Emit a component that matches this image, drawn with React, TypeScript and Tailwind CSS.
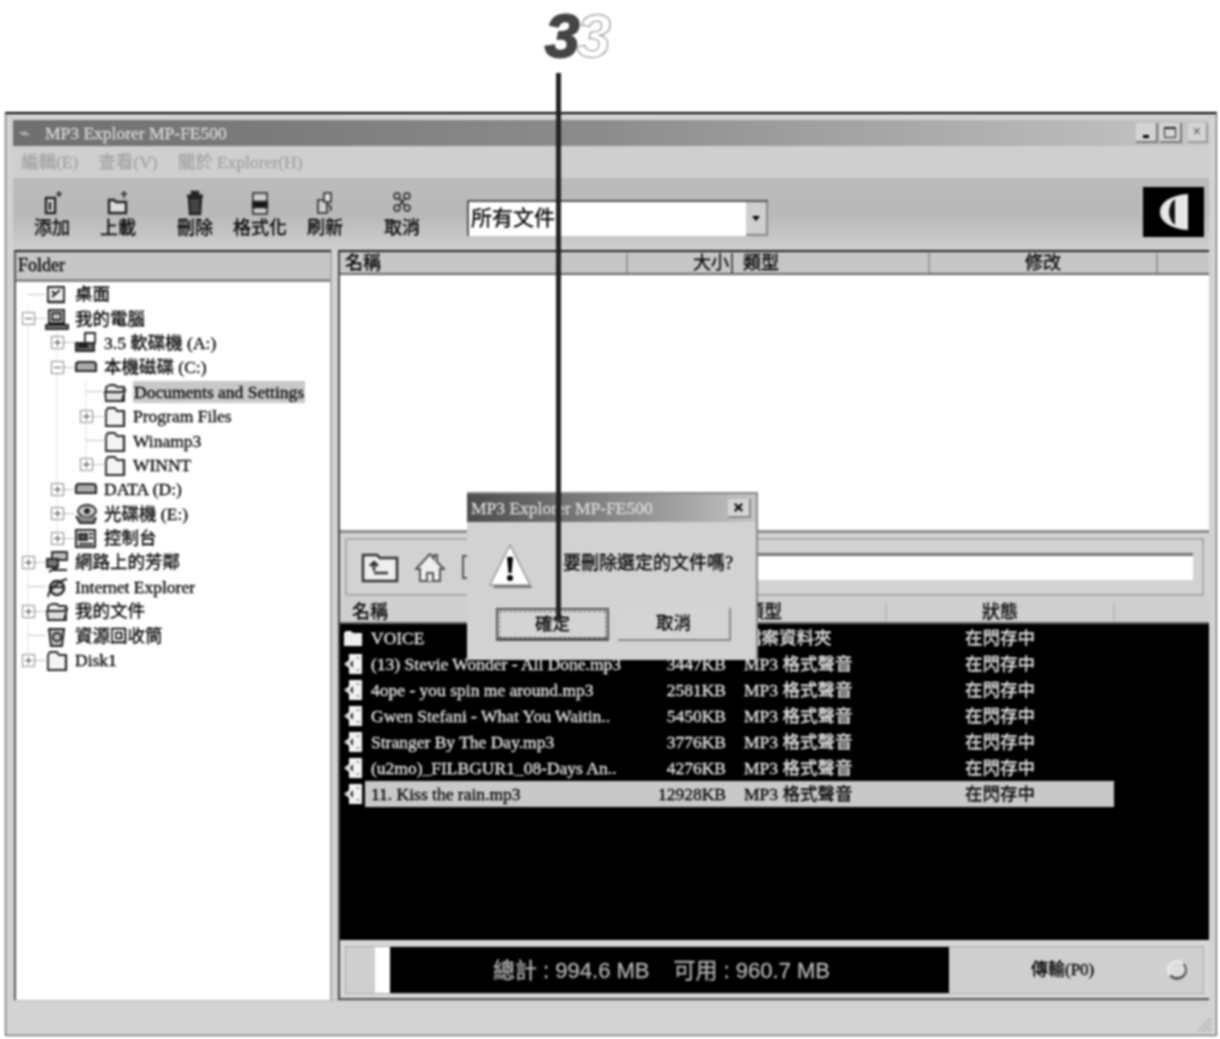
const tools = [
  { label: "添加", icon: "add", cls: "ml-[9px]" },
  { label: "上載", icon: "upload", cls: "ml-[6px]" },
  { label: "刪除", icon: "trash", cls: "ml-[17px]" },
  { label: "格式化", icon: "format", cls: "ml-[5px]" },
  { label: "刷新", icon: "refresh", cls: "ml-[5px]" },
  { label: "取消", icon: "cancel", cls: "ml-[17px]" },
];

const tree = [
  { label: "桌面", pad: "pl-[6px]", box: "", icon: "desktop" },
  { label: "我的電腦", pad: "pl-[6px]", box: "-", icon: "pc" },
  { label: "3.5 軟碟機 (A:)", pad: "pl-[35px]", box: "+", icon: "floppy" },
  { label: "本機磁碟 (C:)", pad: "pl-[35px]", box: "-", icon: "drive" },
  { label: "Documents and Settings", pad: "pl-[64px]", box: "", icon: "open", selected: true },
  { label: "Program Files", pad: "pl-[64px]", box: "+", icon: "folder" },
  { label: "Winamp3", pad: "pl-[64px]", box: "", icon: "folder" },
  { label: "WINNT", pad: "pl-[64px]", box: "+", icon: "folder" },
  { label: "DATA (D:)", pad: "pl-[35px]", box: "+", icon: "drive" },
  { label: "光碟機 (E:)", pad: "pl-[35px]", box: "+", icon: "cd" },
  { label: "控制台", pad: "pl-[35px]", box: "+", icon: "panel" },
  { label: "網路上的芳鄰", pad: "pl-[6px]", box: "+", icon: "net" },
  { label: "Internet Explorer", pad: "pl-[6px]", box: "", icon: "ie" },
  { label: "我的文件", pad: "pl-[6px]", box: "+", icon: "open" },
  { label: "資源回收筒", pad: "pl-[6px]", box: "", icon: "bin" },
  { label: "Disk1", pad: "pl-[6px]", box: "+", icon: "folder" },
];

const files = [
  { name: "VOICE", size: "", type: "檔案資料夾", folder: true },
  { name: "(13) Stevie Wonder - All Done.mp3", size: "3447KB", type: "MP3 格式聲音" },
  { name: "4ope - you spin me around.mp3", size: "2581KB", type: "MP3 格式聲音" },
  { name: "Gwen Stefani - What You Waitin..", size: "5450KB", type: "MP3 格式聲音" },
  { name: "Stranger By The Day.mp3", size: "3776KB", type: "MP3 格式聲音" },
  { name: "(u2mo)_FILBGUR1_08-Days An..", size: "4276KB", type: "MP3 格式聲音" },
  { name: "11. Kiss the rain.mp3", size: "12928KB", type: "MP3 格式聲音", selected: true },
];

function ToolIcon({ name }: { name: string }) {
  return (
    <svg width="26" height="28" viewBox="0 0 24 28" fill="none" stroke="#222" strokeWidth="2.4">
      {name === "add" && (
        <>
          <path d="M6 9h9v15H6z" fill="#ddd" />
          <path d="M10 13v8" />
          <path d="M19 2v6M16 5h6" strokeWidth="1.5" />
        </>
      )}
      {name === "upload" && (
        <>
          <path d="M3 11h5l2 2h10v11H3z" fill="#ddd" />
          <path d="M18 2v7M15 5h6" strokeWidth="1.5" />
        </>
      )}
      {name === "trash" && (
        <>
          <path d="M4 7h16" strokeWidth="3" />
          <path d="M9 3h6v3H9z" fill="#333" />
          <path d="M6 9h12l-1 16H7z" fill="#444" />
        </>
      )}
      {name === "format" && (
        <>
          <path d="M5 4h14v21H5z" fill="#ccc" strokeWidth="1.5" />
          <path d="M5 13h14v5H5z" fill="#111" />
        </>
      )}
      {name === "refresh" && (
        <>
          <path d="M5 11h9v13H5z" fill="#ccc" strokeWidth="1.5" />
          <path d="M11 4h7v9h-7z" fill="#ddd" strokeWidth="1.5" />
          <path d="M14 16c4 0 5 3 3 6" strokeWidth="1.5" />
        </>
      )}
      {name === "cancel" && (
        <>
          <circle cx="7" cy="7" r="3" strokeWidth="1.4" />
          <circle cx="17" cy="7" r="3" strokeWidth="1.4" />
          <circle cx="7" cy="19" r="3" strokeWidth="1.4" />
          <circle cx="17" cy="19" r="3" strokeWidth="1.4" />
          <path d="M9 9l6 8M15 9l-6 8" strokeWidth="1.4" />
        </>
      )}
    </svg>
  );
}

function TreeIcon({ name }: { name: string }) {
  return (
    <svg width="24" height="24" viewBox="0 0 24 24" fill="#ddd" stroke="#222" strokeWidth="1.8">
      {name === "desktop" && (
        <>
          <path d="M3 5h16v15H3z" fill="#eee" />
          <path d="M7 15l8-7M7 9l3 3" />
          <path d="M3 20h17" strokeWidth="2.5" />
        </>
      )}
      {name === "pc" && (
        <>
          <path d="M4 3h15v13H4z" fill="#fff" strokeWidth="2" />
          <path d="M7 6h9v7H7z" fill="#bbb" />
          <path d="M1 18h22v4H1z" fill="#888" />
        </>
      )}
      {name === "floppy" && (
        <>
          <path d="M11 2h10v10H11z" fill="#fff" />
          <path d="M2 12h18v8H2z" fill="#666" strokeWidth="2" />
          <path d="M5 14h8v2H5z" fill="#111" />
        </>
      )}
      {name === "drive" && <path d="M2 10c0-2 1-3 3-3h14c2 0 3 1 3 3v6H2z" fill="#aaa" strokeWidth="2" />}
      {name === "cd" && (
        <>
          <ellipse cx="13" cy="9" rx="9" ry="6" fill="#ccc" />
          <path d="M2 14l4 7h14l2-6" fill="#888" strokeWidth="2" />
          <circle cx="13" cy="9" r="2" fill="#222" />
        </>
      )}
      {name === "panel" && (
        <>
          <path d="M2 4h19v17H2z" fill="#eee" strokeWidth="2" />
          <path d="M5 8h8v6H5z" fill="#555" />
          <path d="M15 8h4M15 12h4M5 18h14" />
        </>
      )}
      {name === "net" && (
        <>
          <path d="M7 2h15v8H7z" fill="#bbb" />
          <path d="M2 9h11v8H2z" fill="#777" />
          <path d="M6 20h16M4 22c4-3 6-3 8-5" strokeWidth="2" />
        </>
      )}
      {name === "ie" && (
        <>
          <circle cx="12" cy="13" r="7" fill="#ddd" strokeWidth="2.5" />
          <path d="M6 12h12" strokeWidth="2" />
          <path d="M3 22c0-6 10-16 19-18" fill="none" strokeWidth="2" />
        </>
      )}
      {name === "bin" && (
        <>
          <path d="M4 5h15l-2 17H6z" fill="#bbb" strokeWidth="2" />
          <circle cx="12" cy="13" r="4" fill="none" />
        </>
      )}
      {name === "open" && (
        <>
          <path d="M3 7l4-2h5l2 2h7v14H3z" fill="#eee" />
          <path d="M2 12h16l4-2-3 11H3z" fill="#ddd" />
        </>
      )}
      {name === "folder" && (
        <>
          <path d="M3 7l2-3h7l2 3h7v15H3z" fill="#f4f4f4" />
          <path d="M21 8v14H5" strokeWidth="2.2" fill="none" />
        </>
      )}
    </svg>
  );
}

function FileIcon({ folder }: { folder?: boolean }) {
  if (folder) {
    return (
      <svg width="20" height="20" viewBox="0 0 20 20" fill="#eee">
        <path d="M1 5l2-2h5l2 2h9v13H1z" />
      </svg>
    );
  }
  return (
    <svg width="20" height="22" viewBox="0 0 20 22">
      <path d="M6 1h13v20H6z" fill="#f2f2f2" />
      <path d="M1 11l5-4v8z" fill="#ddd" />
      <path d="M10 7l-3 4 3 4z" fill="#222" />
      <path d="M13 5h4M13 17h4" stroke="#999" strokeWidth="1.5" />
    </svg>
  );
}

function ExpandBox({ type }: { type: string }) {
  if (!type) {
    return (
      <div className="flex h-full w-[23px] items-center pl-[6px]">
        <div className="w-full border-t border-dotted border-[#888]" />
      </div>
    );
  }
  return (
    <div className="flex w-[23px] items-center">
      <div className="relative h-[13px] w-[13px] shrink-0 border border-[#8c8c8c] bg-white">
        <div className="absolute left-[2px] top-[5px] h-px w-[7px] bg-[#444]" />
        {type === "+" && <div className="absolute left-[5px] top-[2px] h-[7px] w-px bg-[#444]" />}
      </div>
      <div className="flex-1 border-t border-dotted border-[#888]" />
    </div>
  );
}

export default function App() {
  return (
    <div className="relative h-[1039px] w-[1220px] overflow-hidden bg-white font-['Liberation_Serif','Noto_Sans_CJK_TC',serif] text-[17.5px] text-black blur-[0.8px] [-webkit-text-stroke:0.3px]">
      {/* page number */}
      <div className="flex h-[112px] items-start pl-[545px] pt-px font-['Liberation_Sans',sans-serif] text-[62px] font-bold italic leading-[70px] tracking-[-3px]">
        <span className="text-[#444] [-webkit-text-stroke:2px_#444]">3</span>
        <span className="text-white [-webkit-text-stroke:1px_#888]">3</span>
      </div>

      {/* window */}
      <div className="ml-[5px] flex h-[924px] w-[1212px] flex-col border border-t-2 border-[#555] border-t-black bg-[#d2d2d2] px-[7px] pt-[6px]">
        <div className="flex h-[26px] shrink-0 items-center bg-gradient-to-r from-[#6f6f6f] via-[#8d8d8d] to-[#c6c6c6] pl-[6px] pr-px text-[17.5px] text-[#d8d8d8]">
          <span className="w-[26px] text-[#bbb]">⌁</span>
          <span>MP3 Explorer MP-FE500</span>
          <div className="ml-auto flex gap-[2px]">
            <button className="flex h-[20px] w-[22px] items-end justify-center border-b-2 border-r-2 border-[#777] bg-[#d4d4d4] pb-[3px]">
              <div className="h-[3px] w-[6px] bg-black" />
            </button>
            <button className="flex h-[20px] w-[22px] items-center justify-center border-b-2 border-r-2 border-[#777] bg-[#d4d4d4]">
              <div className="h-[11px] w-[12px] border border-t-2 border-[#222]" />
            </button>
            <button className="ml-[4px] flex h-[20px] w-[20px] items-center justify-center border-b-2 border-r-2 border-[#999] bg-[#d4d4d4] text-[14px] leading-none text-[#555]">
              ×
            </button>
          </div>
        </div>

        <div className="flex h-[32px] shrink-0 items-center gap-[20px] bg-[#cfcfcf] pl-[8px] text-[17.5px] text-[#a4a4a4]">
          <span>編輯(E)</span>
          <span>查看(V)</span>
          <span>關於 Explorer(H)</span>
        </div>

        <div className="flex h-[70px] shrink-0 items-start bg-gradient-to-b from-[#bcbcbc] via-[#b8b8b8] to-[#cdcdcd]">
          {tools.map((t) => (
            <div key={t.label} className={`flex w-[60px] flex-col items-center pt-[11px] ${t.cls}`}>
              <ToolIcon name={t.icon} />
              <span className="mt-[1px] text-[18px] leading-[20px]">{t.label}</span>
            </div>
          ))}
          <div className="ml-[35px] mt-[22px] flex h-[36px] w-[301px] items-center border-2 border-b-0 border-r-0 border-[#555] bg-white pl-[2px] text-[21px]">
            <span className="flex-1">所有文件</span>
            <div className="flex h-full w-[22px] items-center justify-center border-b-2 border-r-2 border-[#888] bg-[#cfcfcf]">
              <div className="h-0 w-0 border-x-[4px] border-t-[5px] border-x-transparent border-t-black" />
            </div>
          </div>
          <div className="ml-auto mr-[5px] mt-[9px] h-[50px] w-[61px]">
            <svg width="61" height="50" viewBox="0 0 61 50">
              <path d="M0 0h61v50H0z" fill="#000" />
              <path d="M45 7v36C30 42 17 36 17 25S30 8 45 7z" fill="#e8e8e8" />
              <path d="M32 12C24 18 24 32 32 38z" fill="#111" />
            </svg>
          </div>
        </div>

        {/* main */}
        <div className="mt-[2px] flex h-[750px] shrink-0 pl-px">
          <div className="flex w-[318px] shrink-0 flex-col border-l-2 border-r-2 border-t-2 border-l-[#555] border-r-[#aaa] border-t-[#222] bg-white">
            <div className="flex h-[30px] shrink-0 items-center border-b-[3px] border-[#8a8a8a] bg-[#c6c6c6] pl-[2px] text-[18px]">
              Folder
            </div>
            <div className="relative flex-1">
              <svg className="absolute left-0 top-0" width="120" height="400" fill="none" stroke="#aaa" strokeDasharray="1 2">
                <path d="M12 24V375" />
                <path d="M41 50V255" />
                <path d="M70 100V183" />
              </svg>
              {tree.map((item) => (
                <div key={item.label} className={`relative flex h-[24.4px] items-center ${item.pad}`}>
                  <ExpandBox type={item.box} />
                  <TreeIcon name={item.icon} />
                  <span
                    className={`ml-[6px] whitespace-nowrap leading-[22px] ${
                      item.selected ? "bg-[#c8c8c8] px-px" : ""
                    }`}
                  >
                    {item.label}
                  </span>
                </div>
              ))}
            </div>
          </div>

          <div className="ml-[6px] flex min-w-0 flex-1 flex-col border-l-2 border-t-2 border-l-[#444] border-t-[#222]">
            <div className="flex h-[23px] shrink-0 items-center border-b-2 border-[#666] bg-[#c6c6c6] text-[18px]">
              <div className="w-[288px] border-r-2 border-[#999] pl-[5px] leading-[20px]">名稱</div>
              <div className="w-[105px] border-r-2 border-[#555] pr-[2px] text-right leading-[20px]">大小</div>
              <div className="w-[197px] border-r-2 border-[#999] pl-[10px] leading-[20px]">類型</div>
              <div className="w-[228px] border-r-2 border-[#999] text-center leading-[20px]">修改</div>
            </div>
            <div className="h-[255px] shrink-0 bg-white" />

            <div className="flex h-[68px] shrink-0 items-center border-t-[3px] border-[#8b8b8b] bg-[#d2d2d2] px-[5px] pt-[2px]">
              <div className="flex h-[58px] flex-1 items-center gap-[16px] border-2 border-[#aaa] pl-[14px] pr-[9px]">
                <svg width="38" height="32" viewBox="0 0 38 32" fill="#eee" stroke="#333" strokeWidth="2.5">
                  <path d="M2 4h14l3 3h17v23H2z" />
                  <path d="M13 20V11M9 15l4-4 4 4M13 22h14" strokeWidth="2.5" />
                </svg>
                <svg width="30" height="32" viewBox="0 0 30 32" fill="#eee" stroke="#555" strokeWidth="2">
                  <path d="M15 3L1 18h4v12h20V18h4L22 11V4h-3v4z" />
                  <path d="M12 30v-8h6v8" />
                </svg>
                <svg width="8" height="26" viewBox="0 0 8 26" fill="none" stroke="#555" strokeWidth="2">
                  <path d="M2 2h8v22H2z" />
                </svg>
                <div className="h-[27px] flex-1 border-t-[3px] border-[#777] bg-white" />
              </div>
            </div>

            <div className="flex h-[26px] shrink-0 items-center border-b-2 border-[#666] bg-[#cfcfcf] pt-[3px] text-[18px]">
              <div className="w-[300px] pl-[12px] leading-[20px]">名稱</div>
              <div className="w-[100px]" />
              <div className="w-[145px] pl-[6px] leading-[20px]">類型</div>
              <div className="w-[230px] border-l-2 border-r-2 border-[#bbb] text-center leading-[20px]">狀態</div>
            </div>

            <div className="h-[316px] shrink-0 bg-black pt-px text-[#e8e8e8]">
              {files.map((f) => (
                <div key={f.name} className="flex h-[26px] items-center pl-[3px]">
                  <div className="w-[22px] shrink-0">
                    <FileIcon folder={f.folder} />
                  </div>
                  <div
                    className={`flex h-full w-[749px] items-center pl-[6px] ${
                      f.selected ? "bg-[#c8c8c8] text-black" : ""
                    }`}
                  >
                    <span className="w-[255px] truncate">{f.name}</span>
                    <span className="w-[100px] text-right">{f.size}</span>
                    <span className="ml-[18px] w-[221px]">{f.type}</span>
                    <span className="w-[149px]">在閃存中</span>
                  </div>
                </div>
              ))}
            </div>

            <div className="flex h-[60px] shrink-0 items-center border-b-2 border-[#555] bg-[#d8d8d8] px-[5px] pt-[2px]">
              <div className="flex h-[48px] flex-1 items-stretch border border-[#aaa] bg-[#cfcfcf]">
                <div className="w-[29px] shrink-0" />
                <div className="w-[15px] shrink-0 bg-white" />
                <div className="flex w-[559px] shrink-0 items-center justify-center gap-[24px] bg-black pr-[16px] font-['Liberation_Sans','Noto_Sans_CJK_TC',sans-serif] text-[22px] text-[#b5b5b5]">
                  <span>總計 : 994.6 MB</span>
                  <span>可用 : 960.7 MB</span>
                </div>
                <div className="flex flex-1 items-center pl-[82px] text-[17px]">
                  <span>傳輸(P0)</span>
                  <div className="ml-[73px] h-[20px] w-[20px] rounded-full border-2 border-b-[3px] border-[#eee] border-b-[#555] border-r-[#555] bg-[#ddd]" />
                </div>
              </div>
            </div>
          </div>
        </div>

        {/* status bar */}
        <div className="relative flex-1 border-t border-[#bbb]">
          <svg className="absolute bottom-[2px] right-[-3px]" width="18" height="18" viewBox="0 0 18 18" stroke="#999">
            <path d="M17 3L3 17M17 8l-9 9M17 13l-4 4" />
          </svg>
        </div>
      </div>

      {/* message box */}
      <div className="absolute left-[467px] top-[492px] flex h-[168px] w-[291px] flex-col border-r-2 border-t-2 border-[#888] bg-[#d2d2d2]">
        <div className="flex h-[28px] shrink-0 items-center justify-between bg-gradient-to-r from-[#4c4c4c] to-[#c4c4c4] pl-[4px] pr-[5px] text-[17.5px] text-[#dcdcdc]">
          <span>MP3 Explorer MP-FE500</span>
          <button className="flex h-[19px] w-[23px] items-center justify-center border-b-2 border-r-2 border-[#888] bg-[#d4d4d4] font-['Liberation_Sans',sans-serif] text-[17px] font-bold leading-none text-black">
            ×
          </button>
        </div>
        <div className="flex items-center pl-[20px] pt-[20px]">
          <svg width="46" height="48" viewBox="0 0 46 48">
            <path d="M25 6l20 40H6z" fill="#777" />
            <path d="M23 3l20 40H3z" fill="#fff" stroke="#999" strokeWidth="1.5" strokeLinejoin="round" />
            <path d="M20 15h6l-1.5 16h-3z" fill="#000" />
            <circle cx="23" cy="36" r="3" fill="#000" />
          </svg>
          <span className="mb-[6px] ml-[30px] text-[18px]">要刪除選定的文件嗎?</span>
        </div>
        <div className="ml-[29px] mt-[18px] flex gap-[9px]">
          <button className="flex h-[33px] w-[113px] items-center justify-center border-2 border-b-[3px] border-[#555] bg-[#d4d4d4] text-[17.5px] outline-1 -outline-offset-4 outline-dashed outline-[#666]">
            確定
          </button>
          <button className="flex h-[33px] w-[113px] items-center justify-center border-b-2 border-r-2 border-[#888] bg-[#d4d4d4] text-[17.5px]">
            取消
          </button>
        </div>
      </div>

      {/* callout line */}
      <div className="absolute left-[556px] top-[73px] h-[547px] w-[5px] bg-[#222]" />
    </div>
  );
}
